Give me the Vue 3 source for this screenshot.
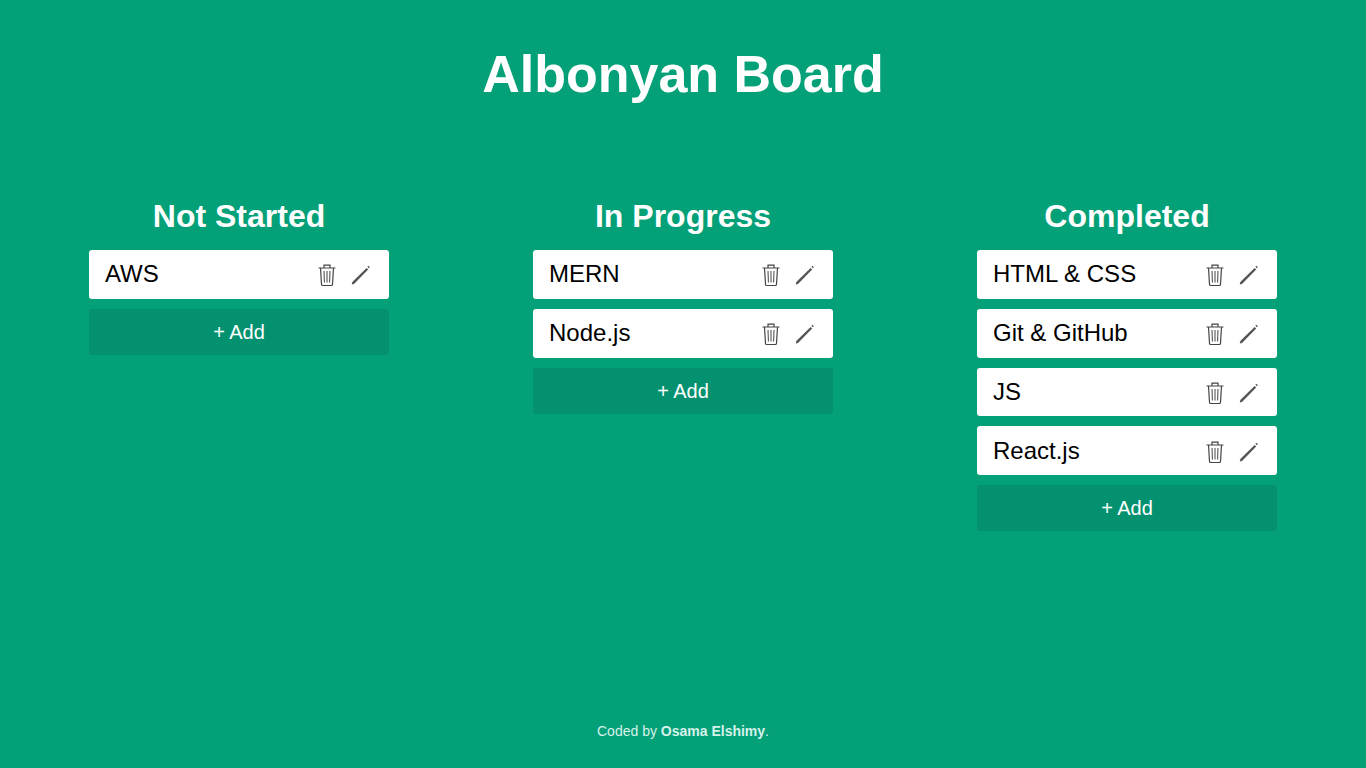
<template>
  <div class="page">
    <h1 class="page-title">Albonyan Board</h1>

    <div class="board">
      <section v-for="col in columns" :key="col.title" class="column">
        <h2 class="column-title">{{ col.title }}</h2>
        <div v-for="item in col.items" :key="item" class="card">
          <span class="card-text">{{ item }}</span>
          <span class="card-actions">
            <svg class="icon" width="20" height="24" viewBox="0 0 20 24" fill="none" stroke="#444" stroke-width="1.2">
              <path d="M1.5 5h17M7 5V2.2h6V5M3.5 5l1 16.2c0 .8.5 1.3 1.3 1.3h8.4c.8 0 1.3-.5 1.3-1.3l1-16.2" />
              <path d="M7 8l.4 11.5M10 8v11.5M13 8l-.4 11.5" stroke-width="1" />
            </svg>
            <svg class="icon" width="20" height="20" viewBox="0 0 20 20" fill="none">
              <path d="M.8 19.4l.5-2.4L15.6 2.9l1.6 1.6L3 18.9z" fill="#555" />
              <path d="M17.4 .8l1.5 1.5-1 1-1.5-1.5z" fill="#555" />
            </svg>
          </span>
        </div>
        <button type="button" class="add-btn">+ Add</button>
      </section>
    </div>

    <footer class="footer">Coded by <b>Osama Elshimy</b>.</footer>
  </div>
</template>

<script setup>
const columns = [
  { title: 'Not Started', items: ['AWS'] },
  { title: 'In Progress', items: ['MERN', 'Node.js'] },
  { title: 'Completed', items: ['HTML & CSS', 'Git & GitHub', 'JS', 'React.js'] },
]
</script>

<style>
html, body {
  margin: 0;
  background: #04a078;
}
</style>

<style scoped>
.page {
  display: flex;
  flex-direction: column;
  height: 768px;
  overflow: hidden;
  background: #04a078;
  color: #fff;
  font-family: "Liberation Sans", Arial, sans-serif;
}

.page-title {
  margin: 41px 0 0;
  font-size: 52px;
  line-height: 66px;
  font-weight: 700;
  text-align: center;
}

.board {
  display: grid;
  grid-template-columns: repeat(3, 1fr);
  padding: 0 17px;
  margin-top: 91px;
  flex: 1;
  align-content: start;
}

.column {
  display: flex;
  flex-direction: column;
  align-items: center;
}

.column-title {
  margin: 0 0 15px;
  font-size: 32px;
  line-height: 37px;
  font-weight: 700;
}

.card {
  box-sizing: border-box;
  display: flex;
  align-items: center;
  justify-content: space-between;
  width: 300px;
  height: 48.8px;
  margin-bottom: 10px;
  padding: 0 18px 0 16px;
  background: #fff;
  border-radius: 3px;
  color: #000;
}

.card-text {
  font-size: 24px;
  line-height: 46px;
}

.card-actions {
  display: flex;
  align-items: center;
  gap: 14px;
  padding-top: 2px;
}

.icon {
  display: block;
}

.add-btn {
  width: 300px;
  height: 46px;
  padding: 1px 0 0;
  border: 0;
  border-radius: 3px;
  background: #03916f;
  color: #fff;
  font-family: inherit;
  font-size: 20px;
}

.footer {
  padding-bottom: 29px;
  font-size: 14px;
  line-height: 16px;
  text-align: center;
  color: #d6f2ea;
}
</style>
